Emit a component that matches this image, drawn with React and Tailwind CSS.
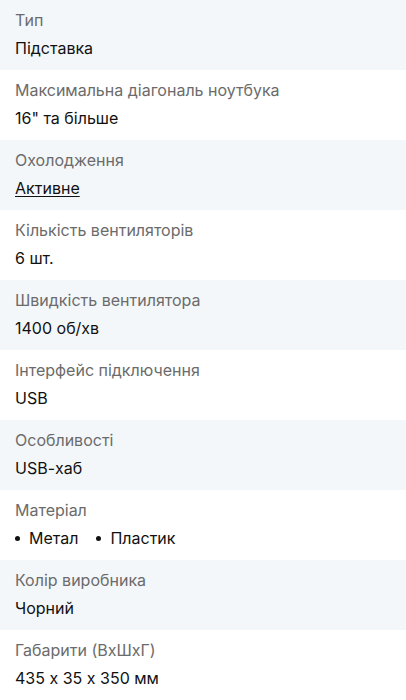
import React from 'react';

const specs = [
  { label: 'Тип', value: 'Підставка' },
  { label: 'Максимальна діагональ ноутбука', value: '16" та більше' },
  { label: 'Охолодження', value: 'Активне', link: true },
  { label: 'Кількість вентиляторів', value: '6 шт.' },
  { label: 'Швидкість вентилятора', value: '1400 об/хв' },
  { label: 'Інтерфейс підключення', value: 'USB' },
  { label: 'Особливості', value: 'USB-хаб' },
  { label: 'Матеріал', list: ['Метал', 'Пластик'] },
  { label: 'Колір виробника', value: 'Чорний' },
  { label: 'Габарити (ВхШхГ)', value: '435 x 35 x 350 мм' },
];

const App = () => {
  return (
    <div className="w-[406px] bg-white font-['Inter','Noto_Sans',sans-serif] text-[16px] [font-feature-settings:'calt'_0]">
      {specs.map((item, i) => (
        <div
          key={item.label}
          className={`h-[70px] px-[15px] pt-[8px] ${i % 2 === 0 ? 'bg-[#f4f7fa]' : 'bg-white'}`}
        >
          <div className="leading-6 text-[#6b6b6b]">{item.label}</div>
          {item.list ? (
            <ul className="mt-1 flex gap-[18px] leading-6 text-[#111]">
              {item.list.map((v) => (
                <li key={v} className="flex items-center gap-[9px]">
                  <span className="w-[5px] h-[5px] rounded-full bg-[#111]" />
                  <span>{v}</span>
                </li>
              ))}
            </ul>
          ) : (
            <div className="mt-1 leading-6 text-[#111]">
              {item.link ? (
                <a href="#" className="underline underline-offset-2">{item.value}</a>
              ) : (
                item.value
              )}
            </div>
          )}
        </div>
      ))}
    </div>
  );
};

export default App;
